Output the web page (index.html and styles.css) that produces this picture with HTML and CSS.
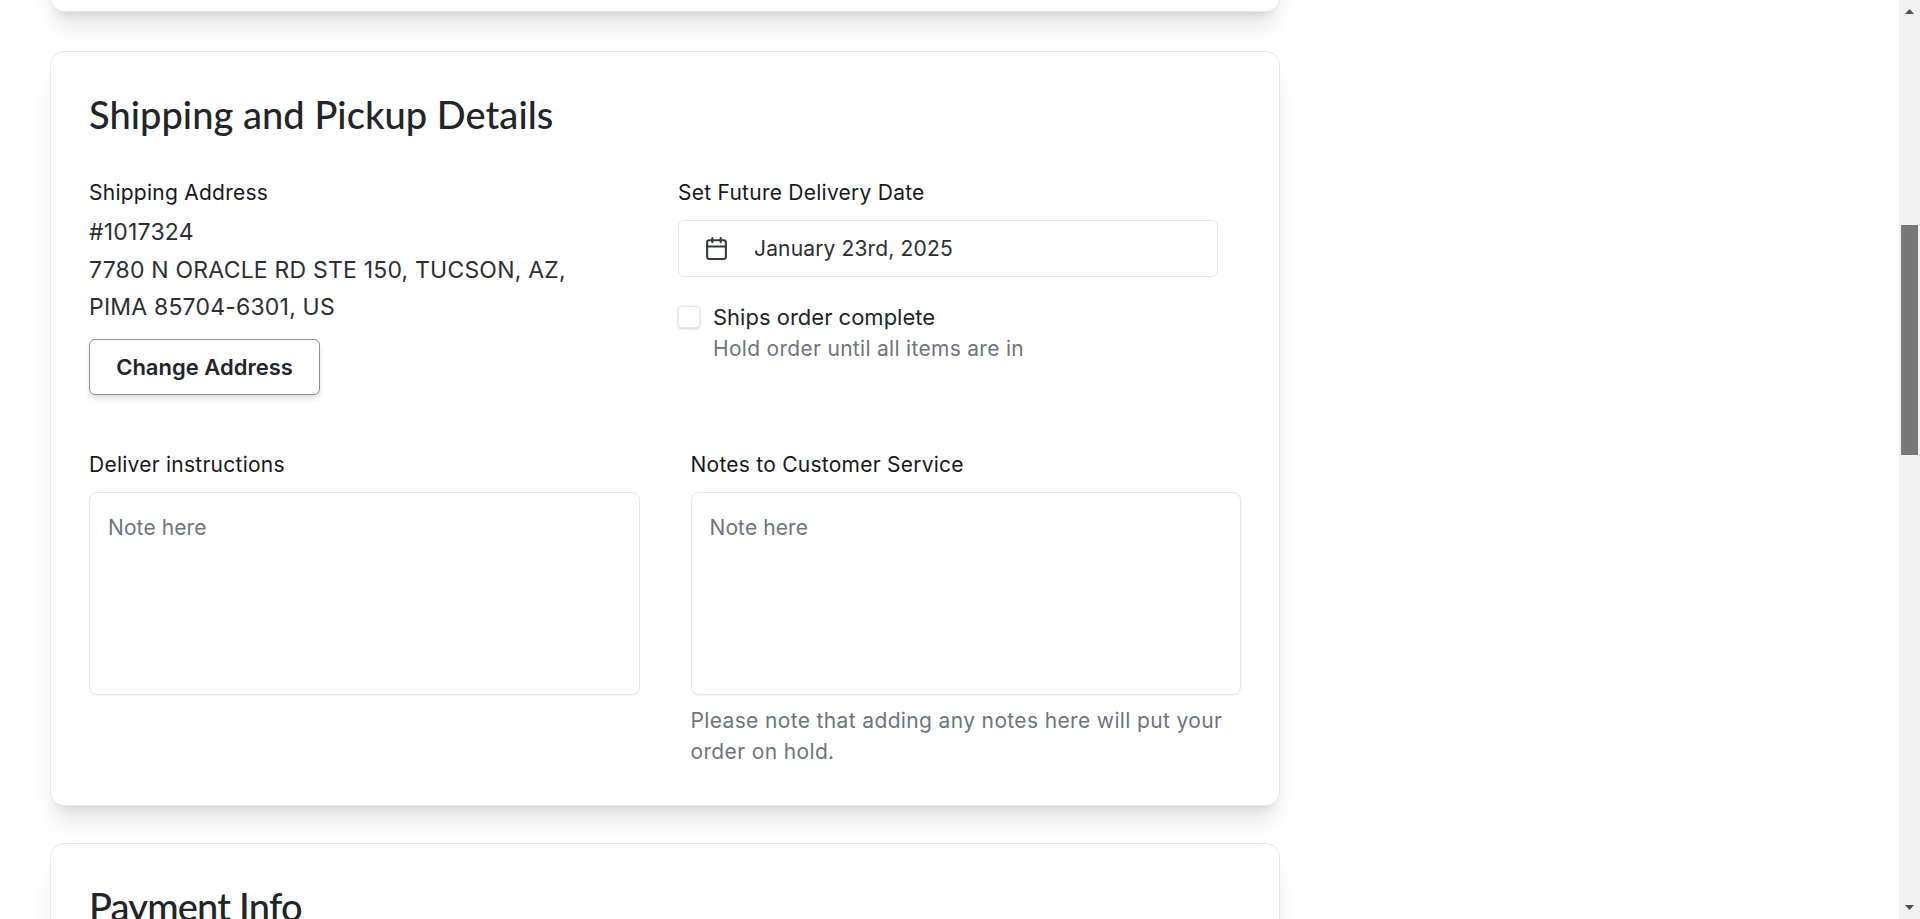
FILE: index.html
```html
<!DOCTYPE html>
<html lang="en">
<head>
<meta charset="utf-8">
<title>Shipping and Pickup Details</title>
<link rel="stylesheet" href="styles.css">
</head>
<body>
<main class="page">
  <div class="card card-stub"></div>

  <section class="card card-shipping">
    <h2 class="card-title">Shipping and Pickup Details</h2>
    <div class="top-row">
      <div class="address-col">
        <div class="label">Shipping Address</div>
        <div class="address">#1017324<br>7780 N ORACLE RD STE 150, TUCSON, AZ,<br>PIMA 85704-6301, US</div>
        <button class="btn" type="button">Change Address</button>
      </div>
      <div class="date-col">
        <div class="label">Set Future Delivery Date</div>
        <div class="date-field">
          <svg class="cal-icon" viewBox="0 0 24 24" width="25" height="25" fill="none" stroke="currentColor" stroke-width="2" stroke-linecap="round" stroke-linejoin="round"><path d="M8 2v4"/><path d="M16 2v4"/><rect x="3" y="4" width="18" height="18" rx="2"/><path d="M3 10h18"/></svg>
          <span class="date-text">January 23rd, 2025</span>
        </div>
        <label class="check-row">
          <input class="check" type="checkbox">
          <span class="check-copy">
            <span class="check-title">Ships order complete</span>
            <span class="check-hint">Hold order until all items are in</span>
          </span>
        </label>
      </div>
    </div>
    <div class="notes-row">
      <div class="note-col">
        <div class="label">Deliver instructions</div>
        <textarea class="note" placeholder="Note here"></textarea>
      </div>
      <div class="note-col">
        <div class="label">Notes to Customer Service</div>
        <textarea class="note" placeholder="Note here"></textarea>
        <p class="help">Please note that adding any notes here will put your order on hold.</p>
      </div>
    </div>
  </section>

  <section class="card card-payment">
    <h2 class="card-title card-title-tight">Payment Info</h2>
  </section>
</main>
<aside class="scrollbar" aria-hidden="true">
  <svg class="arrow" viewBox="0 0 9 5" width="9" height="5"><path d="M4.5 0 9 5H0z"/></svg>
  <div class="thumb"></div>
  <svg class="arrow arrow-down" viewBox="0 0 9 5" width="9" height="5"><path d="M0 0h9L4.5 5z"/></svg>
</aside>
</body>
</html>
```

FILE: styles.css
```css
* { box-sizing: border-box; }
html, body { margin: 0; height: 919px; overflow: hidden; background: #fff; }
body {
  display: flex;
  font-family: "Inter", "Liberation Sans", sans-serif;
  color: #212529;
}
.page { flex: 1; min-width: 0; height: 919px; overflow: hidden; padding: 0 0 0 50px; }
.card {
  width: 1230px;
  background: #fff;
  border: 1px solid #e5e7eb;
  border-radius: 14px;
  box-shadow: 0 20px 25px -5px rgba(0,0,0,.1), 0 8px 10px -6px rgba(0,0,0,.1);
}
.card-stub { height: 112px; margin-top: -100px; margin-bottom: 39px; }
.card-shipping { height: 755px; padding: 38px 38px 0; margin-bottom: 37px; }
.card-payment { height: 200px; padding: 38px; }
.card-title {
  margin: 0;
  font-family: "Lato", "Liberation Sans", sans-serif;
  font-size: 38px;
  line-height: 48px;
  font-weight: 500;
  letter-spacing: 0.05px;
  color: #212529;
}
.card-title-tight { letter-spacing: -0.8px; }
.top-row { display: flex; margin-top: 40px; }
.address-col { width: 589px; }
.date-col { width: 540px; }
.label { font-size: 21px; line-height: 30px; letter-spacing: 0.25px; color: #16181b; }
.address { font-size: 23px; line-height: 37.5px; letter-spacing: 0.2px; margin-top: 6px; color: #2b2f33; }
.btn {
  display: block;
  width: 231px;
  height: 56px;
  margin-top: 12px;
  background: #fff;
  border: 1px solid #8f8f8f;
  border-radius: 6px;
  box-shadow: 0 4px 6px -1px rgba(0,0,0,.15);
  font: 600 22px "Inter", sans-serif;
  color: #212529;
}
.date-field {
  display: flex;
  align-items: center;
  height: 57px;
  margin-top: 12px;
  padding-left: 25px;
  border: 1px solid #e5e7eb;
  border-radius: 6px;
}
.cal-icon { color: #343a40; flex: none; }
.date-text { font-size: 21px; letter-spacing: 0.15px; margin-left: 25px; color: #2b2f33; }
.check-row { display: flex; gap: 13px; margin-top: 29px; }
.check {
  appearance: none;
  flex: none;
  width: 22px;
  height: 22px;
  margin: 0;
  background: #fff;
  border: 1px solid #e5e7eb;
  border-radius: 4px;
  box-shadow: 0 1px 3px rgba(0,0,0,.2);
}
.check-copy { display: flex; flex-direction: column; }
.check-title { font-size: 22px; line-height: 31px; margin-top: -4px; color: #212529; }
.check-hint { font-size: 21px; line-height: 32px; letter-spacing: 0.3px; color: #6c757d; }
.notes-row { display: flex; gap: 51px; margin-top: 55px; }
.note-col { width: 551px; }
.note {
  display: block;
  width: 100%;
  height: 203px;
  margin: 12px 0 0;
  padding: 20px 18px;
  background: #fff;
  border: 1px solid #e5e7eb;
  border-radius: 8px;
  box-shadow: 0 1px 2px rgba(0,0,0,.05);
  font: 21px/30px "Inter", sans-serif;
  letter-spacing: 0.1px;
  resize: none;
  outline: 0;
}
.note::placeholder { color: #6c757d; opacity: 1; }
.help { margin: 10px 0 0; font-size: 21px; line-height: 31px; letter-spacing: 0.36px; color: #6c757d; }
.scrollbar {
  flex: none;
  width: 21px;
  height: 919px;
  background: #f1f1f1;
  display: flex;
  flex-direction: column;
  align-items: center;
  padding-top: 9px;
}
.arrow { fill: #505050; display: block; }
.thumb { width: 17px; height: 230px; margin-top: 211px; background: #787878; }
.arrow-down { margin-top: auto; margin-bottom: 9px; }
```
